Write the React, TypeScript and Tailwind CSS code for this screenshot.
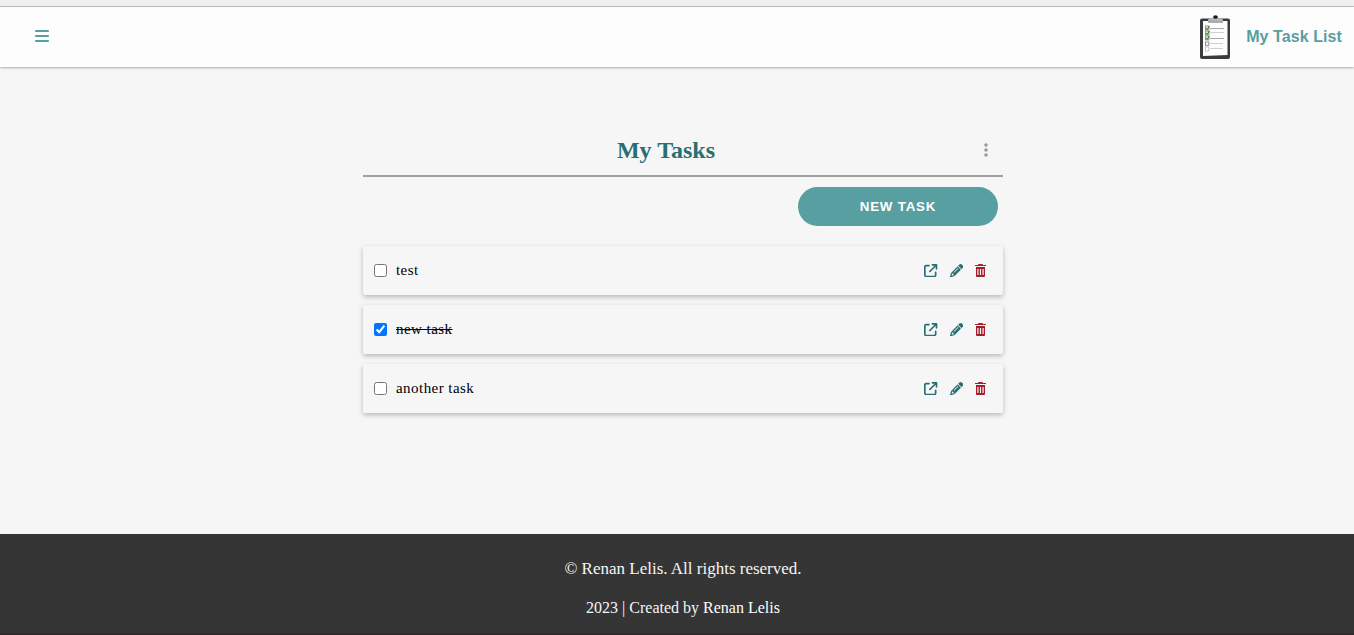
import { useState } from "react";
import {
  FaArrowUpRightFromSquare,
  FaBars,
  FaEllipsisVertical,
  FaPencil,
} from "react-icons/fa6";

type Task = { id: number; name: string; done: boolean };

const initialTasks: Task[] = [
  { id: 1, name: "test", done: false },
  { id: 2, name: "new task", done: true },
  { id: 3, name: "another task", done: false },
];

function ClipboardLogo() {
  return (
    <svg width="32" height="46" viewBox="0 0 32 46" aria-hidden="true">
      <rect x="1" y="4.500" width="30" height="40.500" rx="2" fill="#3b3b3d" />
      <path d="M4 7h24.500v34L4 42z" fill="#fdfdfd" />
      <path d="M9 8.500V6Q9 4.500 11 4.500h2l1.500-2h4l1.500 2h1.500Q24 4.500 24 6v2.500z" fill="#b5b6b8" />
      <path d="M9 8h15" stroke="#8d8e91" />
      <ellipse cx="16.500" cy="3" rx="2.300" ry="1.700" fill="#17181a" />
      {[14, 19, 24].map((y) => (
        <g key={y}>
          <rect x="6.500" y={y - 2} width="3.500" height="4" fill="#dce4d7" stroke="#737873" strokeWidth=".7" />
          <path d={`M6.800 ${y}l1.400 1.500l2.200-3.500`} fill="none" stroke="#38702b" strokeWidth="1" />
        </g>
      ))}
      <rect x="6.500" y="28" width="3.300" height="3.300" fill="#fff" stroke="#777" strokeWidth=".8" />
      <rect x="6.500" y="33" width="3.300" height="4" fill="#fff" stroke="#bbb" strokeWidth=".8" />
      <path d="M11 14.500h14M11 24.500h14" stroke="#a9a9a9" />
      <path d="M11 18.500h14M11 29.500h13M11 34.500h13" stroke="#d0d0d0" />
    </svg>
  );
}

function TrashIcon() {
  return (
    <svg width="11" height="13" viewBox="0 0 11 13" fill="currentColor" aria-hidden="true">
      <path d="M0 1h3L3.500 0h4L8 1h3v1H0z" />
      <path
        fillRule="evenodd"
        d="M1 3h9v9q0 1-1 1H2q-1 0-1-1zM2.300 5v6h1.200V5zM4.900 5v6h1.200V5zM7.500 5v6h1.200V5z"
      />
    </svg>
  );
}

function Header() {
  return (
    <header className="relative flex h-[60px] shrink-0 items-center justify-between bg-[#fdfdfd] pr-3 pl-[35px] shadow-[0_1px_2px_rgba(0,0,0,0.3)]">
      <button aria-label="Menu" className="pb-[3px] text-[#589fa1]">
        <FaBars size={16} className="h-4 w-3.5" />
      </button>
      <div className="flex items-center gap-[15px]">
        <ClipboardLogo />
        <span className="pb-px text-base font-bold tracking-[0.08px] text-[#589fa1]">
          My Task List
        </span>
      </div>
    </header>
  );
}

function TaskRow({ task, onToggle }: { task: Task; onToggle: () => void }) {
  return (
    <li className="flex h-[49px] items-center rounded-[2px] bg-[#f6f6f6] pr-[17px] pl-[11px] shadow-[0_2px_5px_rgba(0,0,0,0.26)]">
      <label className="flex flex-1 items-center gap-[9px]">
        <input type="checkbox" checked={task.done} onChange={onToggle} className="size-[13px]" />
        <span
          className={
            task.done
              ? "font-['Liberation_Serif',serif] text-[15px] tracking-[0.45px] text-black line-through"
              : "font-['Liberation_Serif',serif] text-[15px] tracking-[0.45px] text-black"
          }
        >
          {task.name}
        </span>
      </label>
      <div className="flex items-center text-[#286f73]">
        <button aria-label="Open">
          <FaArrowUpRightFromSquare size={13.333} />
        </button>
        <button aria-label="Edit" className="ml-3">
          <FaPencil size={13.333} />
        </button>
        <button aria-label="Delete" className="ml-3 text-[#a51c2b]">
          <TrashIcon />
        </button>
      </div>
    </li>
  );
}

export default function App() {
  const [tasks, setTasks] = useState(initialTasks);
  const toggle = (id: number) =>
    setTasks(tasks.map((t) => (t.id === id ? { ...t, done: !t.done } : t)));

  return (
    <div className="flex h-[635px] flex-col overflow-hidden bg-[#f6f6f6] font-['Liberation_Sans',Arial,sans-serif]">
      <div className="h-[7px] shrink-0 border-b border-[#bcbcbc] bg-[#f0f0f0]" />
      <Header />
      <main className="ml-[363px] w-[640px] flex-1 pt-[58px]">
        <div className="flex h-[52px] items-center border-b-2 border-[#a0a0a0] pr-[14px]">
          <h1 className="flex-1 pr-[14px] text-center font-['Liberation_Serif',serif] text-2xl font-bold text-[#286f73]">
            My Tasks
          </h1>
          <button aria-label="More" className="text-[#999]">
            <FaEllipsisVertical size={16} className="h-4 w-1.5" />
          </button>
        </div>
        <div className="flex justify-end pt-2.5 pr-[5px]">
          <button className="h-[39px] w-[200px] rounded-full bg-[#589fa1] text-[13.333px] font-bold tracking-[0.8px] text-white">
            NEW TASK
          </button>
        </div>
        <ul className="mt-5 flex flex-col gap-2.5">
          {tasks.map((task) => (
            <TaskRow key={task.id} task={task} onToggle={() => toggle(task.id)} />
          ))}
        </ul>
      </main>
      <footer className="flex h-[101px] shrink-0 flex-col items-center gap-[15px] border-b-2 border-[#302c2e] bg-[#353535] pt-[23px] pl-3 font-['Liberation_Serif',serif] text-base text-[#f6f6f6]">
        <p className="text-[17px]/6">© Renan Lelis. All rights reserved.</p>
        <p>
          2023 | Created by <a className="text-white">Renan Lelis</a>
        </p>
      </footer>
    </div>
  );
}
